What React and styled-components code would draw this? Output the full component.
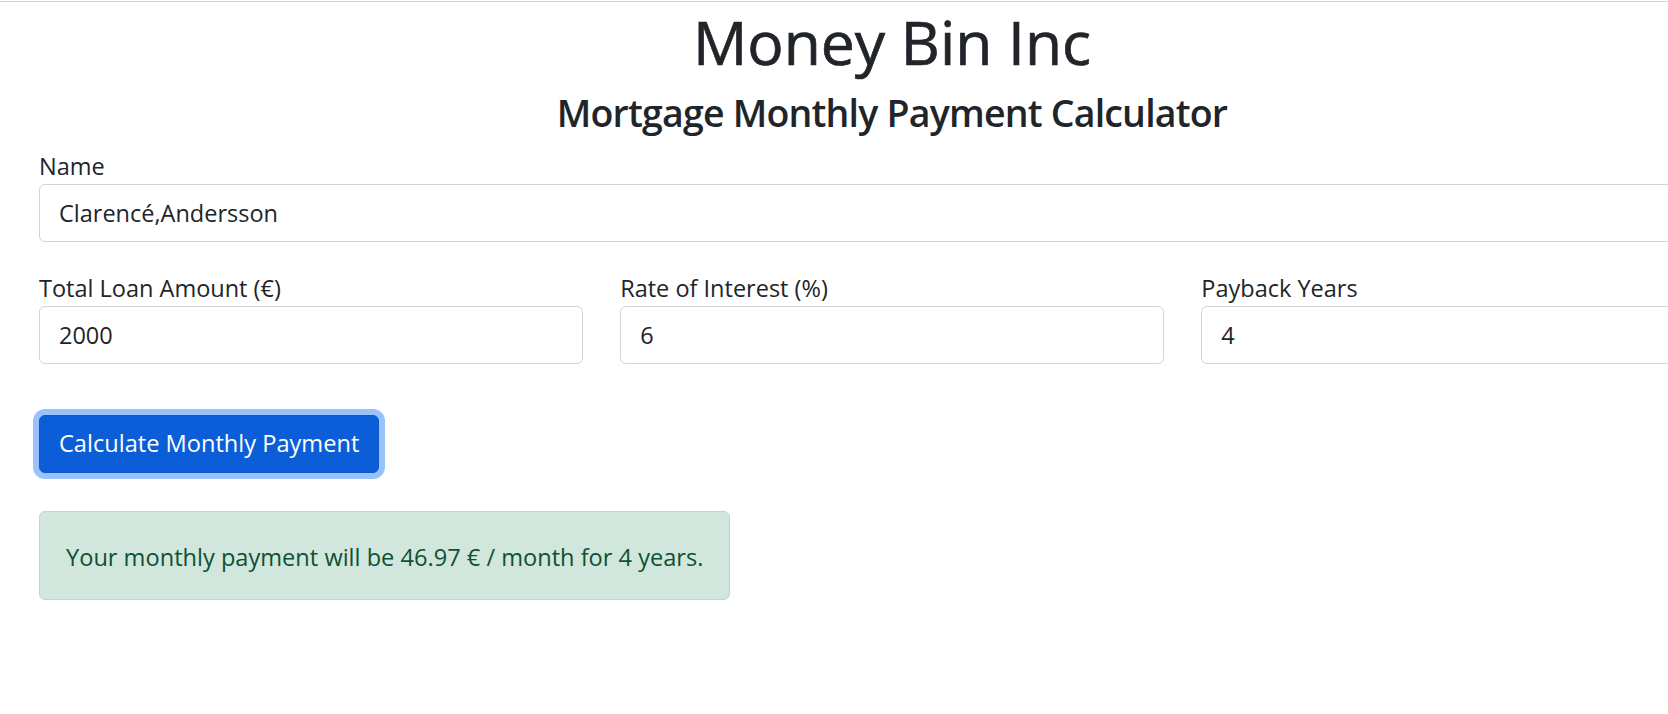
import React from "react";
import styled, { createGlobalStyle } from "styled-components";

const GlobalStyle = createGlobalStyle`
  html, body {
    margin: 0;
    padding: 0;
    background: #ffffff;
    overflow: hidden;
  }
  body {
    font-family: "Open Sans", "Noto Sans", "Liberation Sans", sans-serif;
    color: #212529;
  }
  * { box-sizing: border-box; }
`;

const Page = styled.main`
  margin-top: 1px;
  border-top: 1px solid #d4d4d4;
  width: 1784px;
  padding: 0 39px;
  display: flex;
  flex-direction: column;
`;

const Title = styled.h1`
  margin: 4px 0 0;
  text-align: center;
  font-size: 60.5px;
  line-height: 72px;
  font-weight: 400;
  -webkit-text-stroke: 0.7px #212529;
  color: #212529;
`;

const Subtitle = styled.h3`
  margin: 11px 0 0;
  text-align: center;
  font-size: 37.5px;
  line-height: 48px;
  font-weight: 600;
  letter-spacing: -0.8px;
  color: #212529;
`;

const Field = styled.div`
  display: flex;
  flex-direction: column;
  margin-top: ${(p) => p.$mt || 0}px;
`;

const Label = styled.label`
  display: block;
  font-size: 23.5px;
  line-height: 35px;
  color: #212529;
`;

const Input = styled.input`
  display: block;
  width: 100%;
  height: 58px;
  padding: 0 19px;
  border: 1px solid #ced4da;
  border-radius: 6px;
  background: #fff;
  font-family: inherit;
  font-size: 23.5px;
  color: #212529;
  outline: none;
`;

const Row = styled.div`
  display: grid;
  grid-template-columns: repeat(3, 1fr);
  column-gap: 37.5px;
  margin-top: 29px;
`;

const Button = styled.button`
  align-self: flex-start;
  margin-top: 51px;
  height: 58px;
  padding: 0 19px;
  border: 1px solid #0a58ca;
  border-radius: 6px;
  background: #0b5ed7;
  color: #fff;
  font-family: inherit;
  font-size: 23.6px;
  line-height: 1;
  box-shadow: 0 0 0 6px #98c1fe;
  cursor: pointer;
`;

const Alert = styled.div`
  align-self: flex-start;
  margin-top: 38px;
  padding: 27px 26px 23px;
  border: 1px solid #badbcc;
  border-radius: 6px;
  background: #d1e7dd;
  color: #0f5132;
  font-size: 23.6px;
  line-height: 37px;
`;

export default function App() {
  return (
    <>
      <GlobalStyle />
      <Page>
        <Title>Money Bin Inc</Title>
        <Subtitle>Mortgage Monthly Payment Calculator</Subtitle>
        <Field $mt={12}>
          <Label htmlFor="name">Name</Label>
          <Input id="name" defaultValue="Clarencé,Andersson" />
        </Field>
        <Row>
          <Field>
            <Label htmlFor="amount">Total Loan Amount (€)</Label>
            <Input id="amount" defaultValue="2000" />
          </Field>
          <Field>
            <Label htmlFor="rate">Rate of Interest (%)</Label>
            <Input id="rate" defaultValue="6" />
          </Field>
          <Field>
            <Label htmlFor="years">Payback Years</Label>
            <Input id="years" defaultValue="4" />
          </Field>
        </Row>
        <Button type="button">Calculate Monthly Payment</Button>
        <Alert>Your monthly payment will be 46.97 € / month for 4 years.</Alert>
      </Page>
    </>
  );
}
